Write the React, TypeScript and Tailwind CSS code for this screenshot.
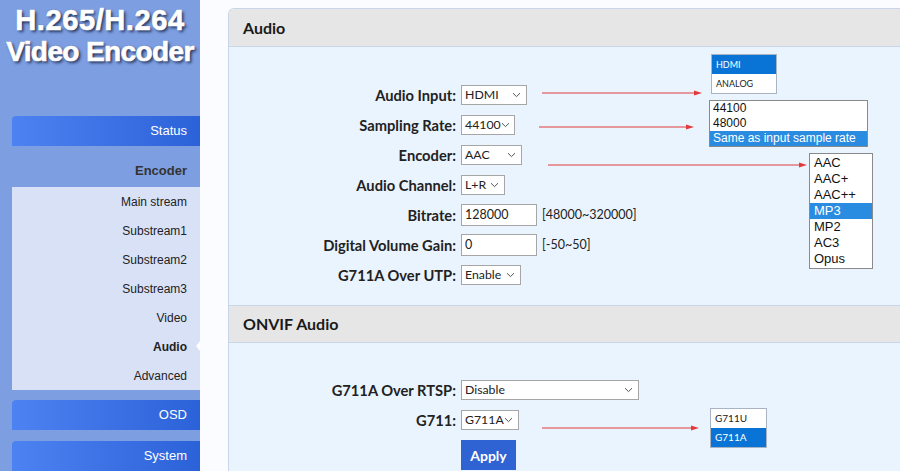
import React from 'react'

const ui = { fontFamily: 'Lato, "Open Sans", sans-serif' }
const arial = { fontFamily: '"Liberation Sans", Arial, sans-serif' }

function Chevron() {
  return (
    <svg width="9" height="6" viewBox="0 0 9 6" className="ml-auto shrink-0">
      <path d="M1 1.2 L4.5 4.6 L8 1.2" fill="none" stroke="#555" strokeWidth="1" />
    </svg>
  )
}

function Select({ value, w }: { value: string; w: string }) {
  return (
    <div className={`${w} h-[20px] bg-white border border-[#a6a6a6] flex items-center pl-[3px] pr-[5px] text-[12.3px] text-[#222]`}>
      <span>{value}</span>
      <Chevron />
    </div>
  )
}

function Input({ value }: { value: string }) {
  return (
    <div className="w-[76px] h-[22px] bg-white border border-[#a6a6a6] flex items-center pl-[3px] text-[12.5px] text-[#222]">
      {value}
    </div>
  )
}

function Row({ label, children }: { label: string; children: React.ReactNode }) {
  return (
    <div className="flex items-center h-[30px]">
      <div className="w-[232px] text-right font-bold text-[14.7px] text-[#222] pr-[5px]">{label}</div>
      {children}
    </div>
  )
}

function Arrow({ x, y, w }: { x: number; y: number; w: number }) {
  return (
    <svg className="absolute" style={{ left: x, top: y - 4 }} width={w} height="8" viewBox={`0 0 ${w} 8`}>
      <line x1="0" y1="4" x2={w - 6} y2="4" stroke="#e23b3b" strokeWidth="1.2" />
      <path d={`M${w - 8} 1.5 L${w} 4 L${w - 8} 6.5 Z`} fill="#e23b3b" />
    </svg>
  )
}

function NavButton({ label }: { label: string }) {
  return (
    <div className="ml-[12px] h-[30px] rounded-tl-[4px] bg-gradient-to-r from-[#4d82f2] to-[#2c62d8] flex items-center justify-end pr-[13px] text-white text-[13px]">
      {label}
    </div>
  )
}

export default function App() {
  const sub = ['Main stream', 'Substream1', 'Substream2', 'Substream3', 'Video', 'Audio', 'Advanced']
  return (
    <div className="w-[900px] h-[471px] overflow-hidden flex bg-[#fbfcff]" style={arial}>
      {/* Sidebar */}
      <div className="w-[200px] shrink-0 bg-[#7e9ee2] flex flex-col">
        <div className="h-[116px] pt-[4px] text-center text-white font-bold leading-[32px]"
          style={{ textShadow: '2px 2px 3px #24345a, 0 0 1px #24345a', WebkitTextStroke: '0.7px white' }}>
          <div className="text-[29px] tracking-[0.6px]">H.265/H.264</div>
          <div className="text-[28px] tracking-[-0.6px]">Video Encoder</div>
        </div>
        <NavButton label="Status" />
        <div className="h-[41px] flex items-end justify-end pr-[13px] pb-[7px] font-bold text-[13px] text-[#333]">Encoder</div>
        <div className="ml-[12px] bg-[#d9e1f7] flex flex-col">
          {sub.map(s => (
            <div key={s} className={`relative h-[29px] flex items-center justify-end pr-[13px] text-[12px] text-[#222] ${s === 'Audio' ? 'font-bold' : ''}`}>
              {s}
              {s === 'Audio' && (
                <div className="absolute right-0 top-[9px] w-0 h-0 border-y-[5px] border-y-transparent border-r-[4px] border-r-white" />
              )}
            </div>
          ))}
        </div>
        <div className="h-[10px]" />
        <NavButton label="OSD" />
        <div className="h-[11px]" />
        <NavButton label="System" />
      </div>

      {/* Main */}
      <div className="flex-1 pl-[28px] pt-[8px]" style={ui}>
        <div className="relative w-[700px] border-t border-l border-[#c9d5e8] rounded-tl-[6px] overflow-hidden">
          <div className="h-[38px] bg-[#e6e6e6] border-b border-[#c9d5e8] flex items-center pl-[14px] font-bold text-[16px] text-[#1a1a1a]">Audio</div>
          <div className="bg-[#eaf4ff] pt-[33px] pb-[15px]">
            <Row label="Audio Input:"><Select value="HDMI" w="w-[66px]" /></Row>
            <Row label="Sampling Rate:"><Select value="44100" w="w-[54px]" /></Row>
            <Row label="Encoder:"><Select value="AAC" w="w-[61px]" /></Row>
            <Row label="Audio Channel:"><Select value="L+R" w="w-[44px]" /></Row>
            <Row label="Bitrate:"><Input value="128000" /><span className="ml-[5px] text-[12.5px] text-[#222]">[48000~320000]</span></Row>
            <Row label="Digital Volume Gain:"><Input value="0" /><span className="ml-[5px] text-[12.5px] text-[#222]">[-50~50]</span></Row>
            <Row label="G711A Over UTP:"><Select value="Enable" w="w-[60px]" /></Row>
          </div>
          <div className="h-[38px] bg-[#e6e6e6] border-y border-[#c9d5e8] flex items-center pl-[14px] font-bold text-[16px] text-[#1a1a1a]">ONVIF Audio</div>
          <div className="bg-[#eaf4ff] pt-[32px] h-[140px]">
            <Row label="G711A Over RTSP:"><Select value="Disable" w="w-[178px]" /></Row>
            <Row label="G711:"><Select value="G711A" w="w-[58px]" /></Row>
            <div className="ml-[232px] mt-[5px] w-[55px] h-[30px] bg-[#2f62d2] text-white font-bold text-[14px] flex items-center justify-center">Apply</div>
          </div>

          {/* annotation arrows (coords relative to panel) */}
          <Arrow x={313} y={84} w={160} />
          <Arrow x={310} y={118} w={155} />
          <Arrow x={319} y={156} w={259} />
          <Arrow x={313} y={419} w={157} />

          {/* dropdown previews */}
          <div className="absolute left-[482px] top-[45px] w-[66px] border border-[#a9b4c2] bg-white text-[9px] text-[#222]">
            <div className="h-[19px] bg-[#0a74d6] text-white flex items-center pl-[4px]">HDMI</div>
            <div className="h-[19px] flex items-center pl-[4px]">ANALOG</div>
          </div>
          <div className="absolute left-[480px] top-[91px] w-[159px] border border-[#8a8a8a] bg-white text-[12px] leading-[15px] text-[#111]" style={arial}>
            <div className="pl-[3px]">44100</div>
            <div className="pl-[3px]">48000</div>
            <div className="pl-[3px] bg-[#2a8ce0] text-white">Same as input sample rate</div>
          </div>
          <div className="absolute left-[580px] top-[144px] w-[64px] border border-[#8a8a8a] bg-white text-[13px] leading-[16px] text-[#111] py-[1px]" style={arial}>
            {['AAC', 'AAC+', 'AAC++', 'MP3', 'MP2', 'AC3', 'Opus'].map(o => (
              <div key={o} className={`pl-[4px] ${o === 'MP3' ? 'bg-[#2a8ce0] text-white' : ''}`}>{o}</div>
            ))}
          </div>
          <div className="absolute left-[481px] top-[399px] w-[57px] border border-[#a9b4c2] bg-white text-[10px] text-[#222]">
            <div className="h-[19px] flex items-center pl-[4px]">G711U</div>
            <div className="h-[19px] bg-[#0a74d6] text-white flex items-center pl-[4px]">G711A</div>
          </div>
        </div>
      </div>
    </div>
  )
}
